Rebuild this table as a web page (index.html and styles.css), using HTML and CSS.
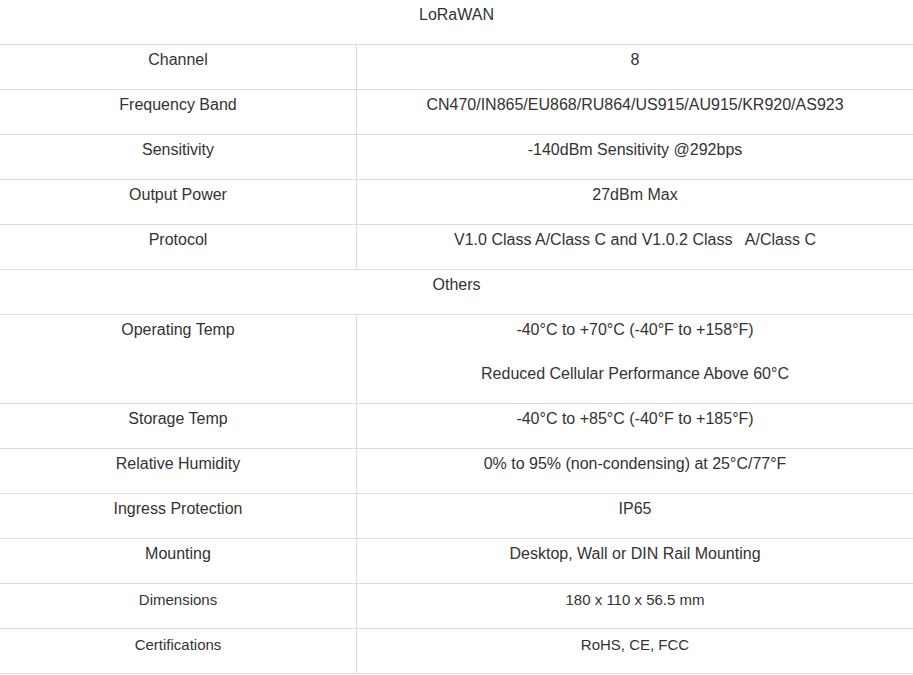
FILE: index.html
```html
<!DOCTYPE html>
<html lang="en">
<head>
<meta charset="utf-8">
<title>Specifications</title>
<link rel="stylesheet" href="styles.css">
</head>
<body>
<table class="spec">
  <colgroup>
    <col class="col-key">
    <col class="col-val">
  </colgroup>
  <tbody>
    <tr class="section"><td colspan="2">LoRaWAN</td></tr>
    <tr><td class="key">Channel</td><td class="val">8</td></tr>
    <tr><td class="key">Frequency Band</td><td class="val">CN470/IN865/EU868/RU864/US915/AU915/KR920/AS923</td></tr>
    <tr><td class="key">Sensitivity</td><td class="val">-140dBm Sensitivity @292bps</td></tr>
    <tr><td class="key">Output Power</td><td class="val">27dBm Max</td></tr>
    <tr><td class="key">Protocol</td><td class="val">V1.0 Class A/Class C and V1.0.2 Class&nbsp;&nbsp; A/Class C</td></tr>
    <tr class="section"><td colspan="2">Others</td></tr>
    <tr><td class="key">Operating Temp</td><td class="val"><p>-40°C to +70°C (-40°F to +158°F)</p><p>Reduced Cellular Performance Above 60°C</p></td></tr>
    <tr><td class="key">Storage Temp</td><td class="val">-40°C to +85°C (-40°F to +185°F)</td></tr>
    <tr><td class="key">Relative Humidity</td><td class="val">0% to 95% (non-condensing) at 25°C/77°F</td></tr>
    <tr><td class="key">Ingress Protection</td><td class="val">IP65</td></tr>
    <tr><td class="key">Mounting</td><td class="val">Desktop, Wall or DIN Rail Mounting</td></tr>
    <tr class="small"><td class="key">Dimensions</td><td class="val">180 x 110 x 56.5 mm</td></tr>
    <tr class="small"><td class="key">Certifications</td><td class="val">RoHS, CE, FCC</td></tr>
  </tbody>
</table>
</body>
</html>
```

FILE: styles.css
```css
html, body {
  margin: 0;
  padding: 0;
  background: #fff;
}

body {
  font-family: "Liberation Sans", Arial, sans-serif;
  font-size: 16px;
  line-height: 24px;
  color: #333;
}

.spec {
  width: 913px;
  margin-top: -1px;
  border-collapse: separate;
  border-spacing: 0;
  table-layout: fixed;
  border-bottom: 1px solid #ddd;
}

.spec .col-key {
  width: 357px;
}

.spec .col-val {
  width: 556px;
}

.spec td {
  box-sizing: border-box;
  border-top: 1px solid #ddd;
  padding: 3px 8px 17px;
  text-align: center;
  vertical-align: top;
}

.spec .key {
  border-right: 1px solid #ddd;
}

.spec p {
  margin: 0;
}

.spec p + p {
  margin-top: 20px;
}

.spec .small td {
  font-size: 15px;
  padding-top: 4px;
  padding-bottom: 16px;
}
```
